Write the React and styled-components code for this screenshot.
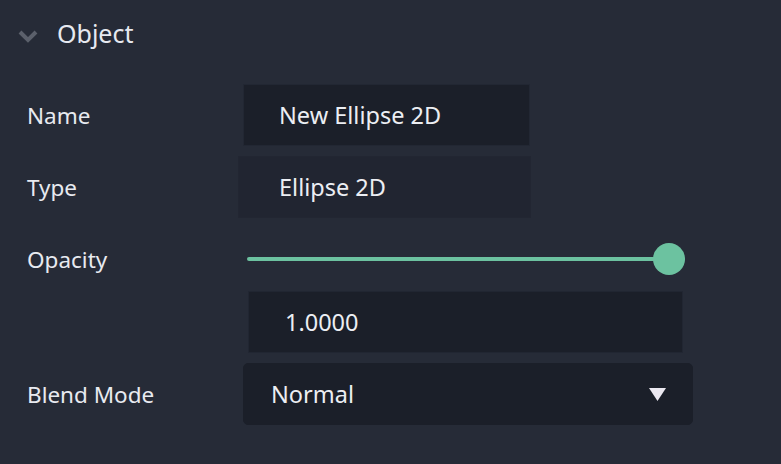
import React from "react";
import styled, { createGlobalStyle } from "styled-components";

const Global = createGlobalStyle`
  html, body { margin: 0; padding: 0; background: #262b37; }
  body { font-family: "Noto Sans", "Open Sans", sans-serif; }
`;

const Panel = styled.div`
  width: 781px;
  height: 464px;
  background: #262b37;
  color: #e8eaf0;
  box-sizing: border-box;
  display: flex;
  flex-direction: column;
`;

const Header = styled.div`
  height: 70px;
  display: flex;
  align-items: center;
  padding-left: 17px;
  gap: 18px;
  font-size: 25px;
  color: #e6e9f0;
  margin-top: -2px;
`;

const Chevron = styled.svg`
  width: 22px;
  height: 16px;
  filter: blur(0.7px);
  margin-top: 6px;
`;

const Body = styled.div`
  display: flex;
  flex-direction: column;
  margin-top: 16px;
`;

const Row = styled.div`
  display: flex;
  align-items: center;
  height: ${(p) => p.$h || 62}px;
  margin-top: ${(p) => p.$mt || 0}px;
`;

const Label = styled.div`
  width: 215px;
  padding-left: 27px;
  box-sizing: border-box;
  font-size: 22.5px;
  color: #e8eaf0;
  flex-shrink: 0;
`;

const Field = styled.div`
  box-sizing: border-box;
  height: 62px;
  margin-left: ${(p) => p.$ml}px;
  width: ${(p) => p.$w}px;
  background: ${(p) => p.$bg || "#1b1f29"};
  border: 1px solid ${(p) => p.$border || "#222733"};
  border-radius: ${(p) => p.$radius || 0}px;
  display: flex;
  align-items: center;
  padding-left: ${(p) => p.$pl}px;
  padding-right: 26px;
  font-size: 23.5px;
  color: #eceef3;
`;

const Grow = styled.span`
  flex: 1;
`;

const SliderWrap = styled.div`
  margin-left: 32px;
  width: 438px;
  height: 32px;
  position: relative;
  display: flex;
  align-items: center;
`;

const Track = styled.div`
  width: 100%;
  height: 4px;
  border-radius: 2px;
  background: #6cc2a0;
`;

const Thumb = styled.div`
  position: absolute;
  right: 0;
  top: 50%;
  width: 32px;
  height: 32px;
  margin-top: -16px;
  border-radius: 50%;
  background: #6cc2a0;
`;

const Caret = styled.svg`
  width: 17px;
  height: 13px;
`;

export default function App() {
  return (
    <Panel>
      <Global />
      <Header>
        <Chevron viewBox="0 0 22 16">
          <polyline
            points="3,4 11,12 19,4"
            fill="none"
            stroke="#5b606b"
            strokeWidth="4"
          />
        </Chevron>
        <span>Object</span>
      </Header>
      <Body>
        <Row>
          <Label>Name</Label>
          <Field $ml={28} $w={287} $pl={35}>New Ellipse 2D</Field>
        </Row>
        <Row $mt={10}>
          <Label>Type</Label>
          <Field $ml={23} $w={293} $pl={40} $bg="#212531" $border="#222632">
            Ellipse 2D
          </Field>
        </Row>
        <Row $mt={19} $h={44}>
          <Label>Opacity</Label>
          <SliderWrap>
            <Track />
            <Thumb />
          </SliderWrap>
        </Row>
        <Row $mt={10}>
          <Label />
          <Field $ml={33} $w={435} $pl={36} $border="#212632">1.0000</Field>
        </Row>
        <Row $mt={10}>
          <Label>Blend Mode</Label>
          <Field $ml={28} $w={450} $pl={27} $radius={5} $border="#1b1f29">
            <Grow>Normal</Grow>
            <Caret viewBox="0 0 17 13">
              <polygon points="0,0 17,0 8.5,13" fill="#ebe8f0" />
            </Caret>
          </Field>
        </Row>
      </Body>
    </Panel>
  );
}
